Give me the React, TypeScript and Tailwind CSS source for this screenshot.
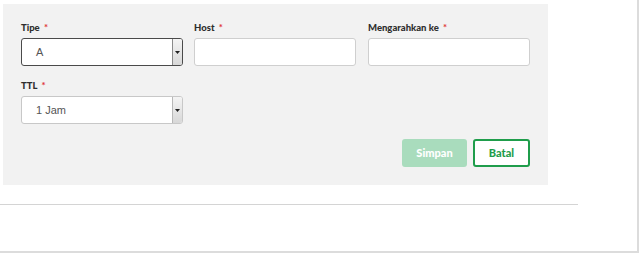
import React from "react"

function Label({ children }: { children: React.ReactNode }) {
  return (
    <div className="mb-[3px] h-[14px] text-[9.5px] font-black leading-[14px] text-[#2e2e2e] [font-family:'Lato','Open_Sans',sans-serif]">
      {children} <span className="ml-[2px] text-[#e0393e]">*</span>
    </div>
  )
}

function Select({ value, focused }: { value: string; focused?: boolean }) {
  return (
    <div
      className={`flex h-[28px] w-[162px] items-stretch rounded-[3px] border bg-white ${
        focused ? "border-[#4a4a4a]" : "border-[#c8c8c8]"
      }`}
    >
      <div className="flex flex-1 items-center pl-[14px] text-[11px] text-[#555] [font-family:'Liberation_Sans',Arial,sans-serif]">
        {value}
      </div>
      <div
        className={`flex w-[10px] items-center justify-center rounded-r-[2px] border-l bg-gradient-to-b from-[#f4f4f4] to-[#d8d8d8] ${
          focused ? "border-[#8a8a8a]" : "border-[#b8b8b8]"
        }`}
      >
        <svg width="5" height="3" viewBox="0 0 5 3">
          <path d="M0 0h5L2.5 3z" fill="#222" />
        </svg>
      </div>
    </div>
  )
}

function Input() {
  return <div className="h-[28px] w-[162px] rounded-[3px] border border-[#cfcfcf] bg-white" />
}

export default function App() {
  return (
    <div className="h-[254px] w-[640px] bg-white">
      <div className="h-[253px] w-[639px] border-b-2 border-r-2 border-[#dcdcdc]">
        <div className="pl-[3px] pt-[4px]">
          <div className="h-[181px] w-[545px] bg-[#f2f2f2] px-[18px] pt-[17px]">
            <div className="flex gap-[11px]">
              <div>
                <Label>Tipe</Label>
                <Select value="A" focused />
              </div>
              <div>
                <Label>Host</Label>
                <Input />
              </div>
              <div className="ml-px">
                <Label>Mengarahkan ke</Label>
                <Input />
              </div>
            </div>
            <div className="mt-[13px]">
              <Label>TTL</Label>
              <Select value="1 Jam" />
            </div>
            <div className="mt-[15px] flex justify-end gap-[6px] [font-family:'Lato',sans-serif]">
              <button className="h-[28px] w-[65px] rounded-[3px] bg-[#a9dcbd] text-[11px] font-black text-white">
                Simpan
              </button>
              <button className="h-[28px] w-[57px] rounded-[3px] border-2 border-[#1f9d4b] bg-white text-[11px] font-black text-[#1f9d4b]">
                Batal
              </button>
            </div>
          </div>
        </div>
        <div className="mt-[19px] h-px w-[578px] bg-[#d4d4d4]" />
      </div>
    </div>
  )
}
